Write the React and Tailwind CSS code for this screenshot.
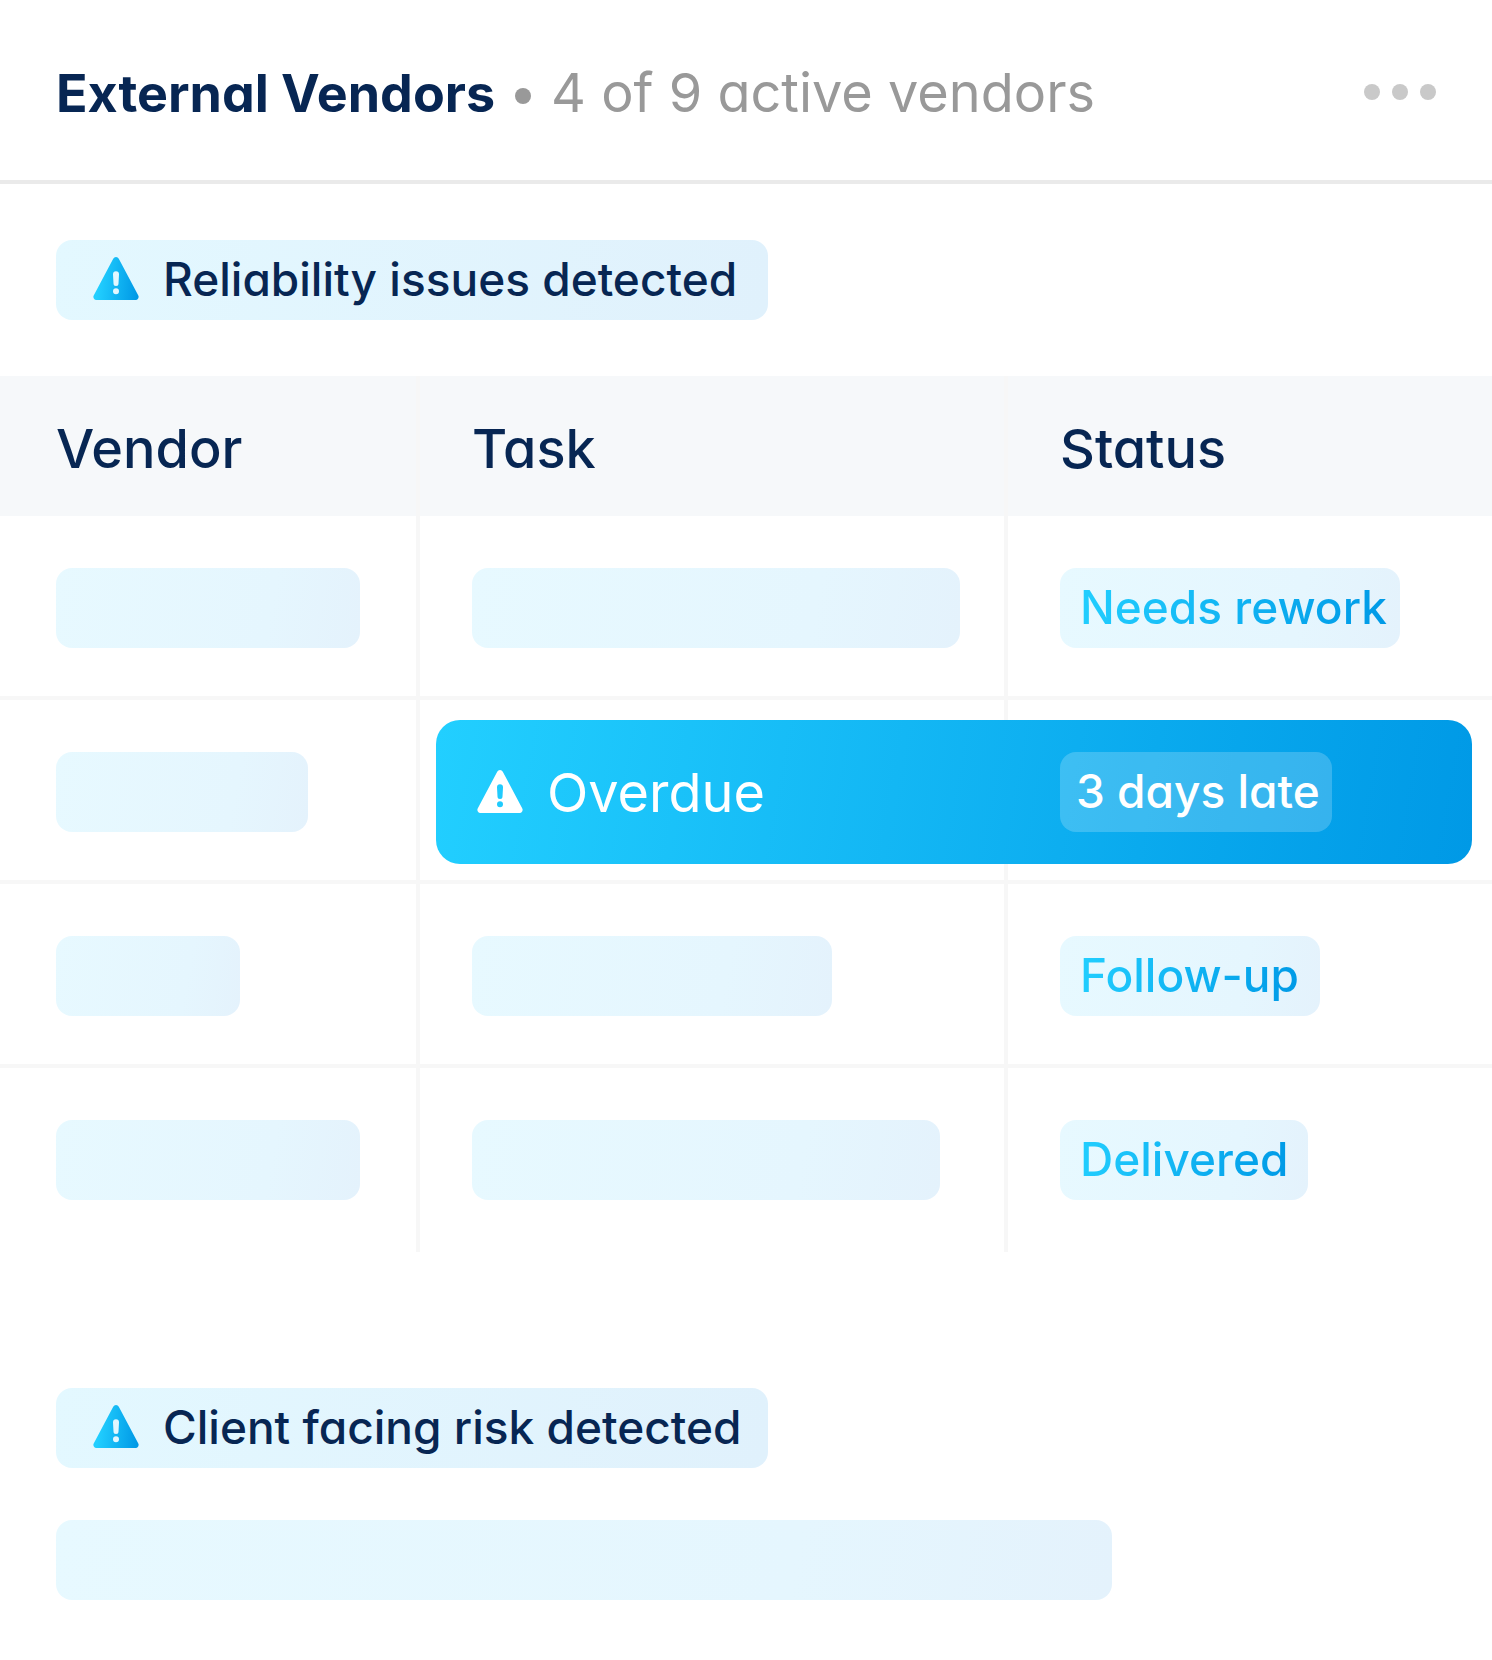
import React, { useId } from 'react';

const vendors = [
  { vendorWidth: 'w-[304px]', taskWidth: 'w-[488px]', status: 'Needs rework', statusWidth: 'w-[340px]' },
  { vendorWidth: 'w-[252px]', overdue: true, status: '3 days late', statusWidth: 'w-[272px]' },
  { vendorWidth: 'w-[184px]', taskWidth: 'w-[360px]', status: 'Follow-up', statusWidth: 'w-[260px]' },
  { vendorWidth: 'w-[304px]', taskWidth: 'w-[468px]', status: 'Delivered', statusWidth: 'w-[248px]' },
];

const WarningIcon = ({ gradient }) => {
  const id = useId();

  return (
    <svg viewBox="0 0 46 44" className="h-11 w-[46px] shrink-0" aria-hidden="true">
      <defs>
        <linearGradient id={id} x1="4" y1="34" x2="44" y2="38" gradientUnits="userSpaceOnUse">
          <stop stopColor="#22CFFF" />
          <stop offset="1" stopColor="#0099E6" />
        </linearGradient>
      </defs>
      <path
        fill={gradient ? `url(#${id})` : 'currentColor'}
        fillRule="evenodd"
        d="M20.2 1.7a3.2 3.2 0 0 1 5.6 0L45.3 38.4a3.2 3.2 0 0 1-2.8 4.6h-39a3.2 3.2 0 0 1-2.8-4.6ZM23 14.3a3 3 0 0 0-3 3.1l.5 9.1a2.5 2.5 0 0 0 5 0l.5-9.1a3 3 0 0 0-3-3.1Zm0 16.9a3 3 0 1 0 0 6 3 3 0 0 0 0-6Z"
      />
    </svg>
  );
};

const AlertBadge = ({ children }) => (
  <div className="flex h-20 w-[712px] items-center gap-6 rounded-2xl bg-linear-100 from-[#e3f8ff] to-[#e0f1fc] pb-0.5 pl-[37px] text-[46px] font-medium whitespace-nowrap">
    <WarningIcon gradient />
    <span>{children}</span>
  </div>
);

const Placeholder = ({ width }) => (
  <div className={`h-20 rounded-2xl bg-linear-100 from-[#e7f9ff] via-[#e5f6fe] via-70% to-[#e4f2fc] ${width}`} />
);

const StatusPill = ({ width, children }) => (
  <div className={`flex h-20 items-center rounded-2xl bg-linear-100 from-[#e7f9ff] via-[#e5f6fe] via-70% to-[#e4f2fc] pb-0.5 pl-5 ${width}`}>
    <span className="bg-linear-100 from-[#22cfff] to-[#0099e6] bg-clip-text text-[46px] font-medium whitespace-nowrap text-transparent">
      {children}
    </span>
  </div>
);

const VendorRow = ({ vendorWidth, taskWidth, overdue, status, statusWidth }) => (
  <tr className="relative h-[184px]">
    <td className="border-r-4 border-[#f7f7f7] pt-[52px] pl-14 align-top">
      <Placeholder width={vendorWidth} />
    </td>
    <td className="border-r-4 border-[#f7f7f7] pt-[52px] pl-[52px] align-top">
      {overdue ? (
        <>
          {/* Overdue banner runs across the task and status columns */}
          <div className="absolute top-5 right-5 left-[436px] h-36 rounded-3xl bg-linear-100 from-[#22cfff] to-[#0099e6]" />
          <div className="relative flex h-20 items-center gap-6 pl-[5px] text-[54px] text-white">
            <WarningIcon />
            <span>Overdue</span>
          </div>
        </>
      ) : (
        <Placeholder width={taskWidth} />
      )}
    </td>
    <td className="border-[#f7f7f7] pt-[52px] pl-[52px] align-top">
      {overdue ? (
        <div className={`relative flex h-20 items-center rounded-2xl bg-white/20 pb-0.5 pl-4 text-[46px] font-medium whitespace-nowrap text-white ${statusWidth}`}>
          {status}
        </div>
      ) : (
        <StatusPill width={statusWidth}>{status}</StatusPill>
      )}
    </td>
  </tr>
);

const App = () => {
  return (
    <div className="min-h-screen bg-white pb-[60px] font-['Inter',sans-serif] text-[#072653] [font-feature-settings:'cv11']">
      {/* Header */}
      <header className="flex h-[184px] items-center justify-between border-b-4 border-[#eaeaea] px-14 pt-1">
        <div className="flex items-baseline gap-5 whitespace-nowrap">
          <h1 className="text-[52px] font-bold">External Vendors</h1>
          <span className="mt-2 size-4 self-center rounded-full bg-[#999999]" />
          <p className="text-[54px] text-[#999999]">4 of 9 active vendors</p>
        </div>
        <button type="button" aria-label="More options" className="flex gap-3">
          <span className="size-4 rounded-full bg-[#c9c9c9]" />
          <span className="size-4 rounded-full bg-[#c9c9c9]" />
          <span className="size-4 rounded-full bg-[#c9c9c9]" />
        </button>
      </header>

      <main>
        <div className="px-14 py-14">
          <AlertBadge>Reliability issues detected</AlertBadge>
        </div>

        {/* Vendor table */}
        <table className="w-full table-fixed border-separate border-spacing-0">
          <colgroup>
            <col className="w-[420px]" />
            <col className="w-[588px]" />
            <col />
          </colgroup>
          <thead>
            <tr className="h-[140px] bg-[#f6f8fa] text-left text-[54px]">
              <th className="border-r-4 border-[#f7f7f7] pt-1 pl-14 font-medium">Vendor</th>
              <th className="border-r-4 border-[#f7f7f7] pt-1 pl-[52px] font-medium">Task</th>
              <th className="pt-1 pl-[52px] font-medium">Status</th>
            </tr>
          </thead>
          <tbody className="[&>tr:not(:last-child)>td]:border-b-4">
            {vendors.map((vendor) => (
              <VendorRow key={vendor.status} {...vendor} />
            ))}
          </tbody>
        </table>

        {/* Client risk */}
        <div className="flex flex-col gap-[52px] px-14 pt-[136px]">
          <AlertBadge>Client facing risk detected</AlertBadge>
          <Placeholder width="w-[1056px]" />
        </div>
      </main>
    </div>
  );
};

export default App;
